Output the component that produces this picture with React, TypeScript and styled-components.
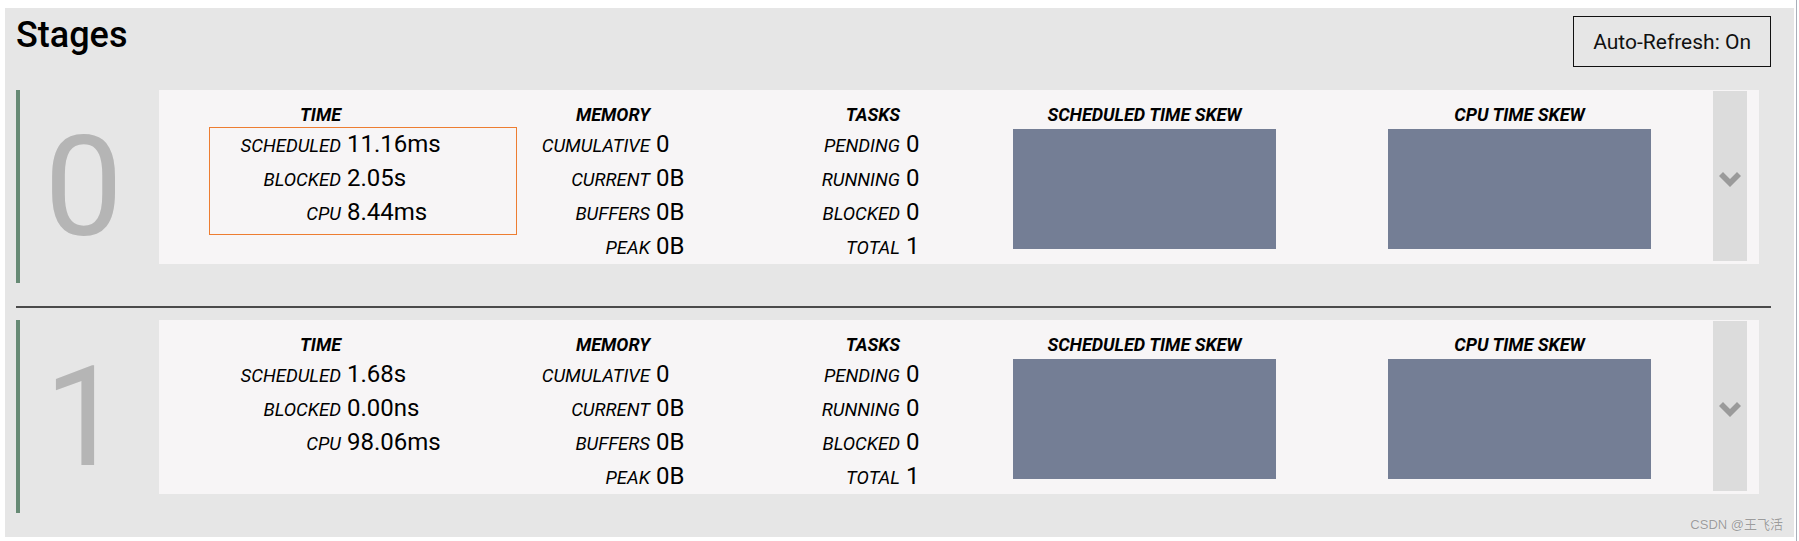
import styled, { createGlobalStyle } from "styled-components";

const GlobalStyle = createGlobalStyle`
  html, body {
    margin: 0;
    padding: 0;
    background: #ffffff;
  }
  body {
    font-family: Roboto, "Noto Sans", "Liberation Sans", sans-serif;
    color: #000;
  }
`;

const Page = styled.div`
  width: 1797px;
  box-sizing: border-box;
  padding: 8px 2px 4px 5px;
  border-right: 1px solid #a9afba;
`;

const Panel = styled.div`
  position: relative;
  background: #e6e6e6;
  padding: 8px 23px 24px 11px;
`;

const Header = styled.div`
  display: flex;
  justify-content: space-between;
  align-items: flex-start;
  margin-bottom: 23px;
`;

const Title = styled.h3`
  margin: -1px 0 0 0;
  font-size: 36px;
  line-height: 40px;
  font-weight: 500;
`;

const RefreshButton = styled.button`
  height: 51px;
  padding: 0 19px;
  border: 1px solid #111;
  background: transparent;
  font-family: Roboto, sans-serif;
  font-size: 21px;
  color: #111;
`;

const StageRow = styled.div`
  display: flex;
  height: 193px;
  border-left: 4px solid #678a75;
`;

const Divider = styled.div`
  height: 2px;
  background: #4b4b4b;
  margin: 23px 0 12px;
`;

const StageId = styled.div`
  width: 139px;
  flex-shrink: 0;
  box-sizing: border-box;
  padding-right: 12px;
  display: flex;
  align-items: center;
  justify-content: center;
  font-size: 140px;
  line-height: 1;
  color: #b5b5b5;
`;

const Card = styled.div`
  position: relative;
  width: 1600px;
  height: 174px;
  flex-shrink: 0;
  background: #f7f5f6;
  display: grid;
  grid-template-columns: 300px 260px 294px 375px 325px 34px;
  align-items: start;
`;

const Highlight = styled.div`
  position: absolute;
  left: 50px;
  top: 37px;
  width: 308px;
  height: 108px;
  border: 1px solid #ed7d31;
  box-sizing: border-box;
`;

const StatColumn = styled.div<{ $labelWidth: number }>`
  display: grid;
  grid-template-columns: ${(p) => p.$labelWidth}px auto;
  column-gap: 6px;
  align-items: baseline;
  padding-top: 15px;
`;

const StatHeader = styled.div`
  grid-column: 1;
  justify-self: end;
  margin-bottom: 1.5px;
  font-size: 18px;
  line-height: 20px;
  font-weight: 700;
  font-style: italic;
  text-transform: uppercase;
`;

const StatLabel = styled.div`
  text-align: right;
  font-size: 18.5px;
  line-height: 20px;
  font-style: italic;
  text-transform: uppercase;
`;

const StatValue = styled.div`
  font-size: 24px;
  line-height: 34.3px;
  white-space: nowrap;
`;

const SkewColumn = styled.div`
  width: 263px;
  padding-top: 15px;
`;

const SkewHeader = styled.div`
  text-align: center;
  font-size: 18px;
  line-height: 20px;
  font-weight: 700;
  font-style: italic;
  text-transform: uppercase;
  white-space: nowrap;
`;

const SkewChart = styled.div`
  margin-top: 4px;
  height: 120px;
  background: #747e95;
`;

const CollapseButton = styled.div`
  margin-top: 1px;
  height: 170px;
  box-sizing: border-box;
  padding-top: 7px;
  background: #dcdcdc;
  display: flex;
  align-items: center;
  justify-content: center;
`;

const Watermark = styled.div`
  position: absolute;
  right: 11px;
  bottom: 4px;
  font-family: "Liberation Sans", "Noto Sans CJK SC", sans-serif;
  font-size: 13px;
  line-height: 16px;
  color: #9c9c9c;
  text-shadow: 0 0 1px #fff;
`;

type Stat = [string, string];

type Stage = {
  id: number;
  time: Stat[];
  memory: Stat[];
  tasks: Stat[];
  highlight?: boolean;
};

const stages: Stage[] = [
  {
    id: 0,
    highlight: true,
    time: [["Scheduled", "11.16ms"], ["Blocked", "2.05s"], ["CPU", "8.44ms"]],
    memory: [["Cumulative", "0"], ["Current", "0B"], ["Buffers", "0B"], ["Peak", "0B"]],
    tasks: [["Pending", "0"], ["Running", "0"], ["Blocked", "0"], ["Total", "1"]],
  },
  {
    id: 1,
    time: [["Scheduled", "1.68s"], ["Blocked", "0.00ns"], ["CPU", "98.06ms"]],
    memory: [["Cumulative", "0"], ["Current", "0B"], ["Buffers", "0B"], ["Peak", "0B"]],
    tasks: [["Pending", "0"], ["Running", "0"], ["Blocked", "0"], ["Total", "1"]],
  },
];

function Chevron() {
  return (
    <svg width="22" height="15" viewBox="0 0 22 15">
      <polygon points="0,4 4,0 11,7 18,0 22,4 11,15" fill="#9a9a9a" />
    </svg>
  );
}

function Stats({ title, rows, labelWidth }: { title: string; rows: Stat[]; labelWidth: number }) {
  return (
    <StatColumn $labelWidth={labelWidth}>
      <StatHeader>{title}</StatHeader>
      <div />
      {rows.map(([label, value]) => [
        <StatLabel key={label + "-l"}>{label}</StatLabel>,
        <StatValue key={label + "-v"}>{value}</StatValue>,
      ])}
    </StatColumn>
  );
}

function StageBlock({ stage }: { stage: Stage }) {
  return (
    <StageRow>
      <StageId>{stage.id}</StageId>
      <Card>
        <Stats title="Time" rows={stage.time} labelWidth={182} />
        <Stats title="Memory" rows={stage.memory} labelWidth={191} />
        <Stats title="Tasks" rows={stage.tasks} labelWidth={181} />
        <SkewColumn>
          <SkewHeader>Scheduled Time Skew</SkewHeader>
          <SkewChart />
        </SkewColumn>
        <SkewColumn>
          <SkewHeader>CPU Time Skew</SkewHeader>
          <SkewChart />
        </SkewColumn>
        <CollapseButton>
          <Chevron />
        </CollapseButton>
        {stage.highlight && <Highlight />}
      </Card>
    </StageRow>
  );
}

export default function App() {
  return (
    <Page>
      <GlobalStyle />
      <Panel>
        <Header>
          <Title>Stages</Title>
          <RefreshButton>Auto-Refresh: On</RefreshButton>
        </Header>
        {stages.map((s, i) => (
          <div key={s.id}>
            {i > 0 && <Divider />}
            <StageBlock stage={s} />
          </div>
        ))}
        <Watermark>CSDN @王飞活</Watermark>
      </Panel>
    </Page>
  );
}
